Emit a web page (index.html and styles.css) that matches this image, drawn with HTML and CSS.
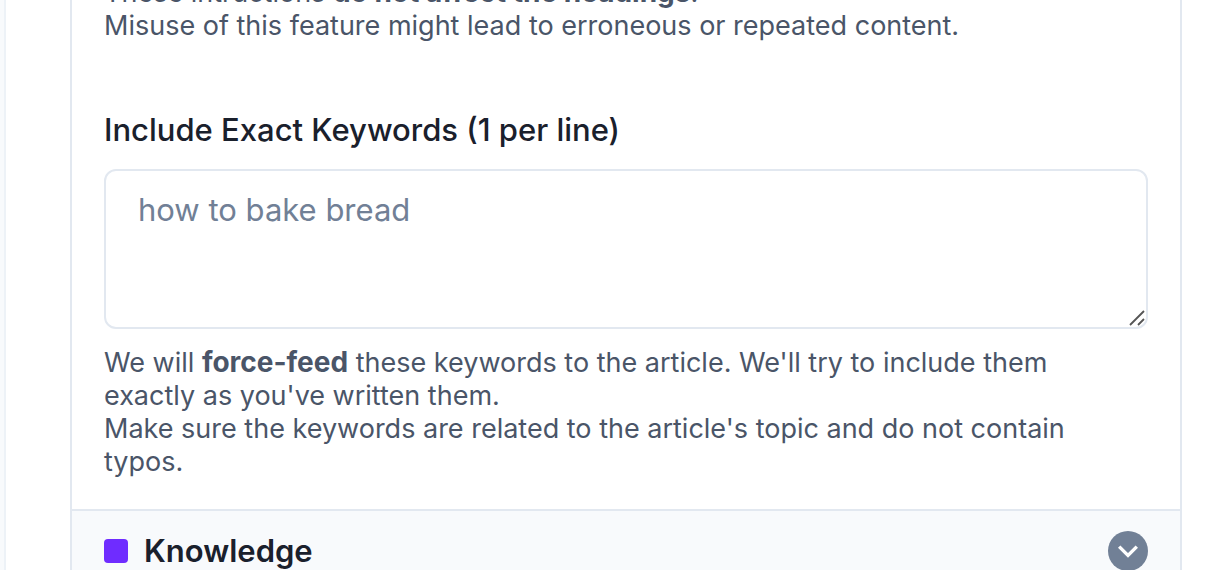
FILE: index.html
```html
<!DOCTYPE html>
<html lang="en">

<head>
  <meta charset="UTF-8">
  <meta name="viewport" content="width=device-width, initial-scale=1">
  <title>Article settings</title>
  <link rel="stylesheet" href="styles.css">
</head>

<body>
  <main class="page">
    <div class="panel">
      <section class="settings">
        <p class="help">These intructions <b>do not affect the headings</b>.<br>
          Misuse of this feature might lead to erroneous or repeated content.</p>

        <div class="field">
          <label class="label" for="keywords">Include Exact Keywords (1 per line)</label>
          <div class="textarea-wrap">
            <textarea class="textarea" id="keywords" placeholder="how to bake bread"></textarea>
            <svg class="grip" viewBox="0 0 16 16" aria-hidden="true">
              <path d="M1 15L15 1M9 15l6-6" fill="none" stroke="#555" stroke-width="1.8"/>
            </svg>
          </div>
          <p class="help">We will <b>force-feed</b> these keywords to the article. We'll try to include them exactly as you've written them.<br>
            Make sure the keywords are related to the article's topic and do not contain typos.</p>
        </div>
      </section>

      <button class="section-toggle" type="button">
        <span class="marker"></span>
        <span class="section-name">Knowledge</span>
        <svg class="chevron" viewBox="0 0 40 40" aria-hidden="true">
          <circle cx="20" cy="20" r="20" fill="#718096"/>
          <path d="M11.2 15.6l8.8 8.8 8.8-8.8" fill="none" stroke="#fff" stroke-width="3.4"/>
        </svg>
      </button>
    </div>
  </main>
</body>

</html>
```

FILE: styles.css
```css
* {
  box-sizing: border-box;
}

body {
  margin: 0;
  height: 100vh;
  overflow: hidden;
  background-color: #f8fafc;
  color: #1a202c;
  font-family: Inter, sans-serif;
}

.page {
  margin-left: 4px;
  padding: 0 44px 0 64px;
  border-left: 2px solid #edf2f7;
  background-color: #fff;
}

.panel {
  height: 100vh;
  overflow: hidden;
  border: 2px solid #e2e8f0;
  border-width: 0 2px;
}

.settings {
  margin-top: -24px;
  padding: 0 32px 31px;
}

.help {
  margin: 0;
  padding-right: 16px;
  color: #4a5568;
  font-size: 27px;
  line-height: 33px;
}

.help b {
  font-size: 28px;
  font-weight: 700;
}

.field {
  margin-top: 64px;
}

.label {
  display: block;
  margin-bottom: 15px;
  font-size: 31px;
  font-weight: 500;
  line-height: 48px;
}

.textarea-wrap {
  position: relative;
  margin-bottom: 17px;
}

.textarea {
  display: block;
  width: 100%;
  height: 160px;
  padding: 16px 32px;
  border: 2px solid #e2e8f0;
  border-radius: 12px;
  background-color: #fff;
  color: #1a202c;
  font: 31px/46px Inter, sans-serif;
  resize: vertical;
}

.textarea::placeholder {
  color: #718096;
}

.textarea::-webkit-resizer {
  background-color: transparent;
}

.grip {
  position: absolute;
  right: 3px;
  bottom: 3px;
  width: 16px;
  height: 16px;
  pointer-events: none;
}

.section-toggle {
  display: flex;
  align-items: center;
  gap: 16px;
  width: 100%;
  padding: 16px 32px;
  border: 0;
  border-top: 2px solid #e2e8f0;
  background-color: #f8fafc;
  color: #1a202c;
  font: 600 31px/48px Inter, sans-serif;
  text-align: left;
}

.marker {
  width: 24px;
  height: 24px;
  border-radius: 4px;
  background-color: #6f2cff;
}

.section-name {
  flex: 1;
}

.chevron {
  width: 40px;
  height: 40px;
}
```
